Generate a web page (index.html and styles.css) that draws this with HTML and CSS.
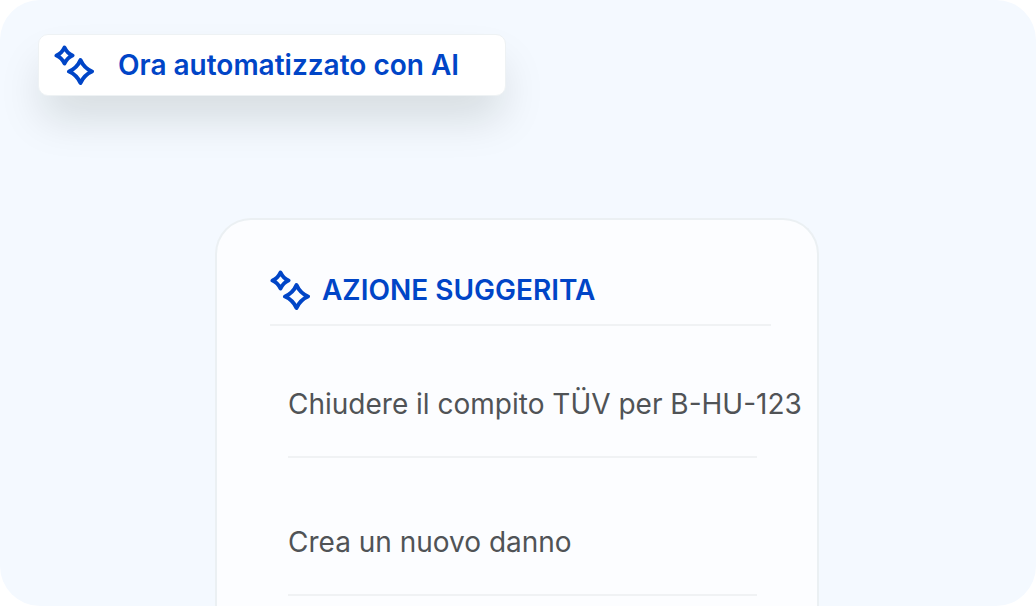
FILE: index.html
```html
<!DOCTYPE html>
<html lang="it">
<head>
  <title>Azione suggerita</title>
  <meta charset="utf-8">
  <meta name="viewport" content="width=device-width, initial-scale=1">
  <link rel="stylesheet" href="styles.css">
</head>
<body>
  <main class="panel">
    <div class="badge">
      <svg class="sparkles" viewBox="0 0 40 40" aria-hidden="true">
        <path d="M10.5 2.5Q13 8 18.5 10.5Q13 13 10.5 18.5Q8 13 2.5 10.5Q8 8 10.5 2.5Z"/>
        <path d="M26.5 15Q30 23 38 26.5Q30 30 26.5 38Q23 30 15 26.5Q23 23 26.5 15Z"/>
      </svg>
      <span class="badge-title">Ora automatizzato con AI</span>
    </div>

    <section class="card">
      <header class="card-header">
        <svg class="sparkles" viewBox="0 0 40 40" aria-hidden="true">
          <path d="M10.5 2.5Q13 8 18.5 10.5Q13 13 10.5 18.5Q8 13 2.5 10.5Q8 8 10.5 2.5Z"/>
          <path d="M26.5 15Q30 23 38 26.5Q30 30 26.5 38Q23 30 15 26.5Q23 23 26.5 15Z"/>
        </svg>
        <h1 class="card-title">AZIONE SUGGERITA</h1>
      </header>
      <ul class="actions">
        <li class="action">Chiudere il compito TÜV per B-HU-123</li>
        <li class="action">Crea un nuovo danno</li>
      </ul>
    </section>
  </main>
</body>
</html>
```
FILE: styles.css
```css
*, *::before, *::after {
  margin: 0;
  box-sizing: border-box;
}

body {
  background-color: #ffffff;
  color: #505356;
  font-family: "Inter", sans-serif;
  font-size: 28px;
  line-height: 36px;
}

.panel {
  display: flex;
  flex-direction: column;
  height: 100vh;
  padding: 34px 40px 0 38px;
  border-radius: 40px;
  background-color: #f4f9ff;
  overflow: hidden;
}

.badge {
  display: flex;
  align-items: center;
  align-self: flex-start;
  gap: 24px;
  padding: 10px 46px 10px 15px;
  border: 1px solid #eef2f4;
  border-radius: 10px;
  background-color: #ffffff;
  box-shadow: 0 26px 44px -4px rgb(10 20 0 / 13%);
}

.badge-title, .card-title {
  color: #0045c7;
  font-size: 28px;
  font-weight: 600;
}

.sparkles {
  flex: none;
  width: 40px;
  height: 40px;
  fill: none;
  stroke: #0045c7;
  stroke-width: 4;
  stroke-linejoin: round;
}

.card {
  flex: 1 0 auto;
  align-self: center;
  width: 604px;
  max-width: 100%;
  margin-top: 122px;
  padding: 50px 46px 0 53px;
  border: 2px solid #ebf0f3;
  border-bottom: 0;
  border-radius: 36px 36px 0 0;
  background-color: #fcfdff;
}

.card-header {
  display: flex;
  align-items: center;
  gap: 12px;
  padding-bottom: 14px;
  border-bottom: 2px solid #f0f2f4;
}

.actions {
  display: grid;
  grid-template-columns: minmax(0, 1fr);
  gap: 66px;
  padding: 60px 14px 0 18px;
  list-style: none;
}

.action {
  padding-bottom: 34px;
  border-bottom: 2px solid #f0f2f4;
  white-space: nowrap;
}
```
